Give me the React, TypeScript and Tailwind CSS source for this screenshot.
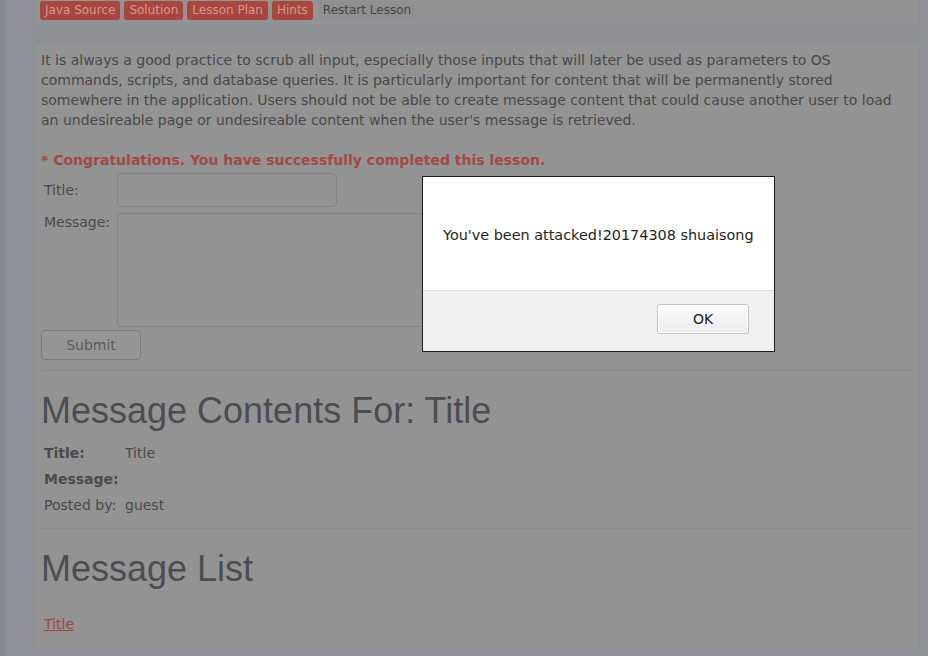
const TABS = ['Java Source', 'Solution', 'Lesson Plan', 'Hints']

function AlertDialog() {
  return (
    <div
      role="alertdialog"
      className="absolute left-[422px] top-[176px] w-[353px] h-[176px] border border-[#1c1c1c] bg-white flex flex-col"
    >
      <div className="h-[113px] flex items-center pl-[20px] pt-[4px] text-[14.4px] text-[#1e1e1e]">
        You've been attacked!20174308 shuaisong
      </div>
      <div className="flex-1 bg-[#f1f1f1] border-t border-[#dedede] flex justify-end items-start pt-[13px] pr-[25px]">
        <button className="w-[92px] h-[30px] rounded-[3px] border border-[#c4c4c4] bg-gradient-to-b from-[#fbfbfb] to-[#ececec] text-[14px] text-[#222] shadow-[inset_0_0_0_1px_#fff]">
          OK
        </button>
      </div>
    </div>
  )
}

export default function App() {
  return (
    <div
      className="relative w-full h-[656px] overflow-hidden bg-[#8f9095] flex text-[#4b4b4b]"
      style={{ fontFamily: '"DejaVu Sans", Verdana, sans-serif' }}
    >
      <div className="w-[6px] bg-[#88898e]" />
      <div className="ml-[29px] w-[883px] flex flex-col">
        <div className="h-[25px] bg-[#939393] flex items-start gap-[4px] pl-[5px] pt-[1px]">
          {TABS.map((t) => (
            <span
              key={t}
              className="h-[19px] px-[5px] rounded-[3px] bg-[#a8473f] text-[#d8968e] text-[12px] leading-[19px]"
            >
              {t}
            </span>
          ))}
          <span className="h-[20px] ml-[1px] px-[5px] bg-[#909090] text-[#454545] text-[12px] leading-[19px]">
            Restart Lesson
          </span>
        </div>
        <div className="h-[19px] bg-[#8e8f93]" />
        <div className="h-[603px] bg-[#939393] px-[6px] pt-[6px]">
          <p className="text-[14px] leading-[20px] text-[#484848] pr-[10px]">
            It is always a good practice to scrub all input, especially those inputs that will later be used as
            parameters to OS commands, scripts, and database queries. It is particularly important for content that
            will be permanently stored somewhere in the application. Users should not be able to create message
            content that could cause another user to load an undesireable page or undesireable content when the
            user's message is retrieved.
          </p>
          <p className="mt-[20px] text-[14px] leading-[20px] font-bold text-[#a04a44]">
            * Congratulations. You have successfully completed this lesson.
          </p>
          <div className="mt-[3px] flex flex-col text-[14px] text-[#4a4a4a]">
            <div className="flex items-center">
              <span className="w-[76px] pl-[3px]">Title:</span>
              <input className="w-[220px] h-[34px] rounded-[5px] border border-[#838383] bg-[#939393]" />
            </div>
            <div className="flex items-start mt-[6px]">
              <span className="w-[76px] pl-[3px] leading-[18px]">Message:</span>
              <textarea className="w-[420px] h-[114px] rounded-[3px] border border-[#838383] bg-[#939393] resize-none" />
            </div>
            <div className="mt-[3px]">
              <button className="w-[100px] h-[30px] rounded-[4px] border border-[#7c7c7c] bg-[#959595] text-[#5a5a5a] text-[14px]">
                Submit
              </button>
            </div>
          </div>
          <hr className="mt-[10px] border-t border-[#89898a]" />
          <h1
            className="mt-[20px] text-[36px] leading-[40px] text-[#4d4d51]"
            style={{ fontFamily: '"Liberation Sans", Arial, sans-serif' }}
          >
            Message Contents For: Title
          </h1>
          <div className="mt-[9px] flex flex-col text-[14px] text-[#4a4a4a] pl-[3px]">
            <div className="h-[26px] flex items-center">
              <span className="w-[81px] font-bold">Title:</span>
              <span>Title</span>
            </div>
            <div className="h-[26px] flex items-center">
              <span className="w-[81px] font-bold">Message:</span>
            </div>
            <div className="h-[26px] flex items-center">
              <span className="w-[81px]">Posted by:</span>
              <span>guest</span>
            </div>
          </div>
          <hr className="mt-[10px] border-t border-[#8b8b8c]" />
          <h1
            className="mt-[20px] text-[36px] leading-[40px] text-[#4d4d51]"
            style={{ fontFamily: '"Liberation Sans", Arial, sans-serif' }}
          >
            Message List
          </h1>
          <div className="mt-[25px] pl-[3px] text-[14px]">
            <a href="#" className="text-[#9c4540] underline">
              Title
            </a>
          </div>
        </div>
      </div>
      <AlertDialog />
    </div>
  )
}
